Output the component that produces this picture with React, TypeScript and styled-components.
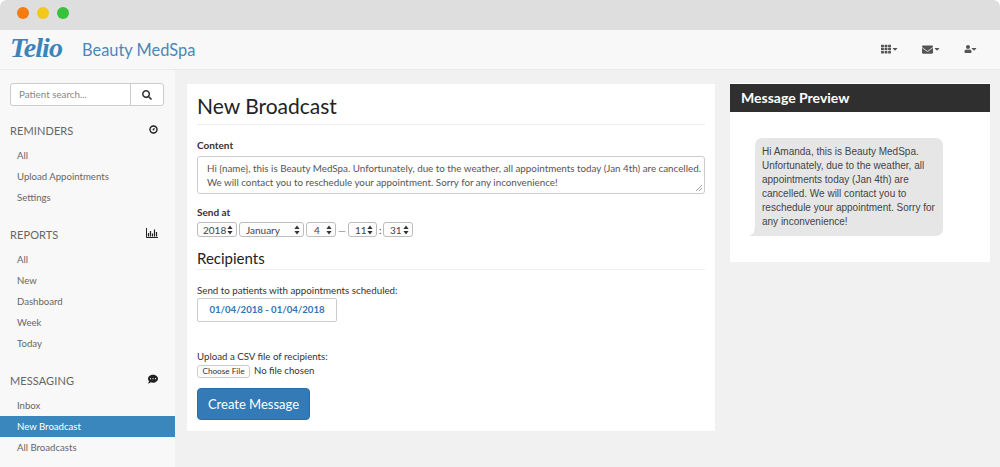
import { ReactNode } from "react";
import styled, { createGlobalStyle } from "styled-components";
import { FaCaretDown, FaCommentDots, FaEnvelope, FaSearch, FaTh, FaUser } from "react-icons/fa";

const Global = createGlobalStyle`
  html, body { margin: 0; padding: 0; background: #fff; }
  * { box-sizing: border-box; }
  body { font-family: Lato, "Open Sans", sans-serif; color: #333; }
`;

const Page = styled.div`
  width: 1000px;
  height: 467px;
  overflow: hidden;
  display: flex;
  flex-direction: column;
  background: #f1f1f1;
  border-radius: 7px 7px 0 0;
`;

const TitleBar = styled.div`
  height: 30px;
  flex: none;
  background: #dedede;
  display: flex;
  align-items: center;
  gap: 8px;
  padding: 0 0 4px 17px;
`;

const Light = styled.span<{ $color: string }>`
  width: 12px;
  height: 12px;
  border-radius: 50%;
  background: ${(p) => p.$color};
`;

const NavBar = styled.header`
  height: 40px;
  flex: none;
  background: #f8f8f8;
  border-bottom: 1px solid #eaeaea;
  display: flex;
  align-items: center;
  padding: 0 0 0 10px;
`;

const Logo = styled.span`
  font-family: "Liberation Serif", serif;
  font-style: italic;
  font-weight: 700;
  font-size: 28px;
  letter-spacing: -0.9px;
  color: #3a84ba;
  width: 72px;
  line-height: 36px;
  margin-top: -4px;
`;

const Brand = styled.span`
  font-size: 16.4px;
  color: #4c86b8;
  margin-top: -1px;
`;

const NavIcons = styled.div`
  margin-left: auto;
  display: flex;
  align-items: center;
  padding-right: 22px;
  gap: 23px;
  margin-top: -1px;
`;

const NavIcon = styled.span`
  display: flex;
  align-items: center;
  color: #555;
  font-size: 11px;
`;

const Caret = styled(FaCaretDown)<{ $tight?: boolean }>`
  margin-left: ${(p) => (p.$tight ? "-2px" : "0")};
`;

const Body = styled.div`
  flex: 1;
  display: flex;
  min-height: 0;
`;

const Sidebar = styled.aside`
  width: 175px;
  flex: none;
  background: #f8f8f8;
  padding: 13px 0 0;
`;

const SearchGroup = styled.div`
  margin: 0 11px 0 10px;
  height: 23px;
  display: flex;
  border: 1px solid #ccc;
  border-radius: 3px;
  background: #fff;
`;

const SearchInput = styled.div`
  flex: 1;
  font-size: 9.8px;
  color: #888;
  line-height: 21px;
  padding-left: 8px;
  border-right: 1px solid #ccc;
`;

const SearchButton = styled.span`
  width: 32px;
  display: flex;
  align-items: center;
  justify-content: center;
  font-size: 10px;
  color: #333;
`;

const Section = styled.section`
  margin-top: 14px;
  & + & { margin-top: 16px; }
`;

const SectionHead = styled.div`
  display: flex;
  justify-content: space-between;
  align-items: center;
  height: 21px;
  padding: 0 17px 0 10px;
  font-size: 11px;
  color: #666;
  letter-spacing: 0.1px;
  margin-bottom: 4px;
  svg { margin-top: -3px; color: #222; }
`;

const Item = styled.div<{ $active?: boolean }>`
  height: 21px;
  line-height: 21px;
  padding-left: 17px;
  font-size: 9.6px;
  color: ${(p) => (p.$active ? "#fff" : "#666")};
  background: ${(p) => (p.$active ? "#3a87bd" : "transparent")};
`;

const Content = styled.main`
  flex: 1;
  display: flex;
  align-items: flex-start;
  gap: 14px;
  padding: 13px 10px 0 11px;
`;

const Card = styled.div`
  width: 530px;
  height: 349px;
  flex: none;
  background: #fff;
  padding: 10px 10px 0;
  border: 1px solid #f0f0f0;
`;

const Title = styled.h1`
  margin: 0;
  font-size: 21px;
  font-weight: 400;
  line-height: 24px;
  color: #222;
  border-bottom: 1px solid #eee;
  height: 31px;
`;

const Label = styled.div<{ $bold?: boolean }>`
  font-size: 10px;
  font-weight: ${(p) => (p.$bold ? 700 : 400)};
  color: #333;
  line-height: 14px;
`;

const ContentLabel = styled(Label)`
  margin-top: 13px;
`;

const MessageBox = styled.div`
  margin-top: 4px;
  height: 38px;
  border: 1px solid #ccc;
  border-radius: 3px;
  font-size: 9.8px;
  line-height: 14.4px;
  color: #555;
  padding: 4px 9px;
  position: relative;
  white-space: nowrap;
`;

const Resize = styled.svg`
  position: absolute;
  right: 1px;
  bottom: 1px;
`;

const SendLabel = styled(Label)`
  margin-top: 11px;
`;

const DateRow = styled.div`
  margin-top: 3px;
  display: flex;
  align-items: center;
  font-size: 10px;
  color: #555;
  gap: 2px;
`;

const Dash = styled.span`
  width: 8px;
  text-align: center;
  color: #888;
  overflow: hidden;
`;

const Colon = styled.span`
  width: 2px;
  color: #333;
`;

const Select = styled.span<{ $width: number; $left: number }>`
  width: ${(p) => p.$width}px;
  height: 15px;
  padding-left: ${(p) => p.$left}px;
  background: #fdfdfd;
  border: 1px solid #bdbdbd;
  border-radius: 3px;
  display: flex;
  align-items: center;
  justify-content: space-between;
  font-size: 10px;
  color: #444;
  padding-right: 3px;
`;

const SubTitle = styled.h2`
  margin: 11px 0 0;
  font-size: 15px;
  font-weight: 400;
  line-height: 20px;
  height: 22px;
  color: #222;
  border-bottom: 1px solid #eee;
`;

const ScheduleLabel = styled(Label)`
  margin-top: 13px;
  font-size: 9.75px;
`;

const RangeBox = styled.div`
  margin-top: 1px;
  width: 140px;
  height: 24px;
  border: 1px solid #ccc;
  border-radius: 2px;
  color: #2f74b5;
  font-weight: 700;
  font-size: 9.6px;
  line-height: 22px;
  text-align: center;
`;

const UploadLabel = styled(Label)`
  margin-top: 27px;
  font-size: 9.7px;
`;

const FileRow = styled.div`
  display: flex;
  align-items: center;
  gap: 4px;
  font-size: 9.6px;
  color: #333;
  line-height: 13px;
`;

const ChooseFile = styled.span`
  width: 53px;
  height: 13px;
  border: 1px solid #ccc;
  border-radius: 3px;
  background: #fcfcfc;
  font-size: 8.2px;
  line-height: 11px;
  text-align: center;
  margin-top: 2px;
`;

const PrimaryButton = styled.div`
  margin-top: 10px;
  width: 113px;
  height: 32px;
  background: #337ab7;
  border: 1px solid #2e6da4;
  border-radius: 4px;
  color: #fff;
  font-size: 13px;
  line-height: 30px;
  text-align: center;
`;

const Preview = styled.aside`
  width: 260px;
  height: 179px;
  flex: none;
  background: #fff;
  padding-top: 1px;
`;

const PreviewHead = styled.div`
  height: 28px;
  background: #2f2f2f;
  color: #fff;
  font-weight: 700;
  font-size: 14px;
  line-height: 28px;
  padding-left: 11px;
`;

const PreviewBody = styled.div`
  padding: 26px 0 0 25px;
`;

const Bubble = styled.div`
  position: relative;
  width: 188px;
  height: 98px;
  background: #e6e6e6;
  border-radius: 7px;
  font-family: "Liberation Sans", Arial, sans-serif;
  font-size: 10px;
  line-height: 14px;
  color: #444;
  padding: 7px 7px;

  &::before {
    content: "";
    position: absolute;
    left: -6px;
    bottom: 0;
    width: 12px;
    height: 10px;
    background: #e6e6e6;
    clip-path: polygon(100% 0, 100% 100%, 0 100%, 40% 70%, 50% 0);
  }
`;

const ClockIcon = () => (
  <svg width="9" height="9" viewBox="0 0 10 10">
    <circle cx="5" cy="5" r="3.9" fill="none" stroke="currentColor" strokeWidth="1.6" />
    <circle cx="5" cy="5" r="1" fill="currentColor" />
    <path d="M5 5 L6.6 3" stroke="currentColor" strokeWidth="0.9" />
  </svg>
);

const BarsIcon = () => (
  <svg width="12" height="10" viewBox="0 0 12 10">
    <path d="M0.5 0v9.5H12" fill="none" stroke="currentColor" strokeWidth="1" />
    <path d="M2.5 5v3.5M4.5 3v5.5M6.5 5.5v3M8.5 1.5v7M10.5 4v4.5" stroke="currentColor" strokeWidth="1.2" />
  </svg>
);

const Arrows = () => (
  <svg width="6" height="10" viewBox="0 0 6 10">
    <path d="M3 0.5 L5.6 4 H0.4 Z M3 9.5 L0.4 6 H5.6 Z" fill="#333" />
  </svg>
);

const DateSelect = ({ width, left, children }: { width: number; left: number; children: ReactNode }) => (
  <Select $width={width} $left={left}>
    <span>{children}</span>
    <Arrows />
  </Select>
);

const Nav = ({ tight, children }: { tight?: boolean; children: ReactNode }) => (
  <NavIcon>
    {children}
    <Caret size={8} $tight={tight} />
  </NavIcon>
);

export default function App() {
  return (
    <>
      <Global />
      <Page>
        <TitleBar>
          <Light $color="#f57c0e" />
          <Light $color="#f2c81a" />
          <Light $color="#38c13a" />
        </TitleBar>
        <NavBar>
          <Logo>Telio</Logo>
          <Brand>Beauty MedSpa</Brand>
          <NavIcons>
            <Nav><FaTh size={10} /></Nav>
            <Nav><FaEnvelope size={11} /></Nav>
            <Nav tight><FaUser size={8} /></Nav>
          </NavIcons>
        </NavBar>
        <Body>
          <Sidebar>
            <SearchGroup>
              <SearchInput>Patient search...</SearchInput>
              <SearchButton><FaSearch /></SearchButton>
            </SearchGroup>
            <Section>
              <SectionHead>REMINDERS<ClockIcon /></SectionHead>
              <Item>All</Item>
              <Item>Upload Appointments</Item>
              <Item>Settings</Item>
            </Section>
            <Section>
              <SectionHead>REPORTS<BarsIcon /></SectionHead>
              <Item>All</Item>
              <Item>New</Item>
              <Item>Dashboard</Item>
              <Item>Week</Item>
              <Item>Today</Item>
            </Section>
            <Section>
              <SectionHead>MESSAGING<FaCommentDots size={10} /></SectionHead>
              <Item>Inbox</Item>
              <Item $active>New Broadcast</Item>
              <Item>All Broadcasts</Item>
            </Section>
          </Sidebar>
          <Content>
            <Card>
              <Title>New Broadcast</Title>
              <ContentLabel $bold>Content</ContentLabel>
              <MessageBox>
                Hi {"{name}"}, this is Beauty MedSpa. Unfortunately, due to the weather, all appointments today (Jan 4th) are cancelled.
                <br />
                We will contact you to reschedule your appointment. Sorry for any inconvenience!
                <Resize width="9" height="9" viewBox="0 0 9 9">
                  <path d="M8 2 L2 8 M8 5 L5 8" stroke="#888" strokeWidth="0.8" />
                </Resize>
              </MessageBox>
              <SendLabel $bold>Send at</SendLabel>
              <DateRow>
                <DateSelect width={40} left={5}>2018</DateSelect>
                <DateSelect width={65} left={6}>January</DateSelect>
                <DateSelect width={30} left={7}>4</DateSelect>
                <Dash>—</Dash>
                <DateSelect width={29} left={6}>11</DateSelect>
                <Colon>:</Colon>
                <DateSelect width={30} left={6}>31</DateSelect>
              </DateRow>
              <SubTitle>Recipients</SubTitle>
              <ScheduleLabel>Send to patients with appointments scheduled:</ScheduleLabel>
              <RangeBox>01/04/2018 - 01/04/2018</RangeBox>
              <UploadLabel>Upload a CSV file of recipients:</UploadLabel>
              <FileRow>
                <ChooseFile>Choose File</ChooseFile>
                <span>No file chosen</span>
              </FileRow>
              <PrimaryButton>Create Message</PrimaryButton>
            </Card>
            <Preview>
              <PreviewHead>Message Preview</PreviewHead>
              <PreviewBody>
                <Bubble>
                  Hi Amanda, this is Beauty MedSpa. Unfortunately, due to the weather, all appointments today (Jan 4th) are cancelled. We will contact you to reschedule your appointment. Sorry for any inconvenience!
                </Bubble>
              </PreviewBody>
            </Preview>
          </Content>
        </Body>
      </Page>
    </>
  );
}
